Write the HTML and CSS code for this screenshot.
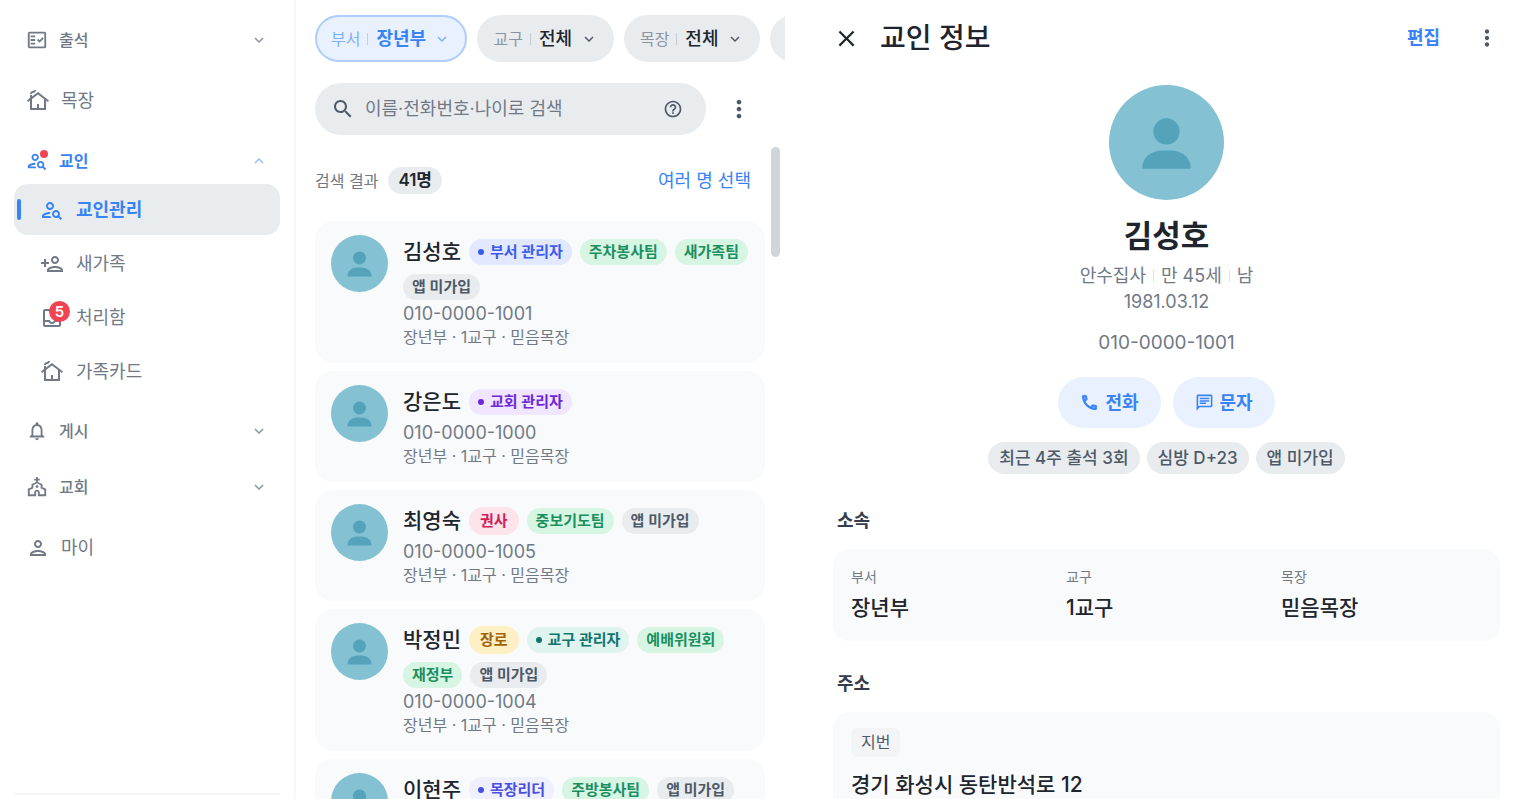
FILE: index.html
```html
<!DOCTYPE html>
<html lang="ko">

<head>
	<meta charset="UTF-8">
	<meta name="viewport" content="width=device-width, initial-scale=1.0">
	<title>교인관리</title>

	<link rel="stylesheet" href="styles.css">
</head>

<body>
	<!-- Icon sprite -->
	<svg class="sprite" aria-hidden="true">
		<symbol id="i-attend" viewBox="0 0 24 24"><path d="M20 3H4c-1.1 0-2 .9-2 2v14c0 1.1.9 2 2 2h16c1.1 0 2-.9 2-2V5c0-1.1-.9-2-2-2zm0 16H4V5h16v14z"/><path d="M19.41 10.42 17.99 9l-3.17 3.17-1.41-1.42L12 12.16 14.82 15zM5 7h5v2H5zM5 11h5v2H5zM5 15h5v2H5z"/></symbol>
		<symbol id="i-cottage" viewBox="0 0 24 24"><path d="M12 3 6 7.58V6H4v3.11L1 11.4l1.21 1.59L4 11.62V21h16v-9.38l1.79 1.36L23 11.4 12 3zm6 16h-5v-4h-2v4H6v-8.9l6-4.58 6 4.58V19zM10 1c0 1.66-1.34 3-3 3-.55 0-1 .45-1 1H4c0-1.66 1.34-3 3-3 .55 0 1-.45 1-1h2z"/></symbol>
		<symbol id="i-people" viewBox="0 0 24 24"><path d="M10 12c2.21 0 4-1.79 4-4s-1.79-4-4-4-4 1.79-4 4 1.79 4 4 4zm0-6c1.1 0 2 .9 2 2s-.9 2-2 2-2-.9-2-2 .9-2 2-2zM4 18c.22-.72 3.31-2 6-2 0-.7.13-1.37.35-1.99C7.62 13.91 2 15.27 2 18v2h9.54c-.52-.58-.93-1.25-1.19-2H4zM19.43 18.02c.36-.59.57-1.28.57-2.02 0-2.21-1.79-4-4-4s-4 1.79-4 4 1.79 4 4 4c.74 0 1.43-.22 2.02-.57L20.59 22 22 20.59l-2.57-2.57zM16 18c-1.1 0-2-.9-2-2s.9-2 2-2 2 .9 2 2-.9 2-2 2z"/></symbol>
		<symbol id="i-add" viewBox="0 0 24 24"><path d="M15 12c2.21 0 4-1.79 4-4s-1.79-4-4-4-4 1.79-4 4 1.79 4 4 4zm0-6c1.1 0 2 .9 2 2s-.9 2-2 2-2-.9-2-2 .9-2 2-2zm0 8c-2.67 0-8 1.34-8 4v2h16v-2c0-2.66-5.33-4-8-4zm-6 4c.22-.72 3.31-2 6-2 2.7 0 5.8 1.29 6 2H9zm-3-3v-3h3v-2H6V7H4v3H1v2h3v3z"/></symbol>
		<symbol id="i-inbox" viewBox="0 0 24 24"><path d="M19 3H5c-1.1 0-2 .9-2 2v14c0 1.1.9 2 2 2h14c1.1 0 2-.9 2-2V5c0-1.1-.9-2-2-2zm0 16H5v-3h3.56c.69 1.19 1.97 2 3.45 2s2.75-.81 3.45-2H19v3zm0-5h-4.99c0 1.1-.9 2-2 2s-2-.9-2-2H5V5h14v9z"/></symbol>
		<symbol id="i-bell" viewBox="0 0 24 24"><path d="M12 22c1.1 0 2-.9 2-2h-4c0 1.1.9 2 2 2zm6-6v-5c0-3.07-1.63-5.64-4.5-6.32V4c0-.83-.67-1.5-1.5-1.5s-1.5.67-1.5 1.5v.68C7.64 5.36 6 7.92 6 11v5l-2 2v1h16v-1l-2-2zm-2 1H8v-6c0-2.48 1.51-4.5 4-4.5s4 2.02 4 4.5v6z"/></symbol>
		<symbol id="i-church" viewBox="0 0 24 24"><path d="M18 12.22V9l-5-2.5V5h2V3h-2V1h-2v2H9v2h2v1.5L6 9v3.22L2 14v8h9v-4c0-.55.45-1 1-1s1 .45 1 1v4h9v-8l-4-1.78zM20 20h-5v-2.04c0-1.69-1.35-3.06-3-3.06s-3 1.37-3 3.06V20H4v-4.79l4-1.81v-3.35L12 8l4 2.04v3.35l4 1.81V20z"/><circle cx="12" cy="11.5" r="1.5"/></symbol>
		<symbol id="i-person" viewBox="0 0 24 24"><path d="M12 6c1.1 0 2 .9 2 2s-.9 2-2 2-2-.9-2-2 .9-2 2-2m0 10c2.7 0 5.8 1.29 6 2H6c.23-.72 3.31-2 6-2m0-12C9.79 4 8 5.79 8 8s1.79 4 4 4 4-1.79 4-4-1.79-4-4-4zm0 10c-2.67 0-8 1.34-8 4v2h16v-2c0-2.66-5.33-4-8-4z"/></symbol>
		<symbol id="i-down" viewBox="0 0 24 24"><path d="M7.41 8.59 12 13.17l4.59-4.58L18 10l-6 6-6-6z"/></symbol>
		<symbol id="i-up" viewBox="0 0 24 24"><path d="M7.41 15.41 12 10.83l4.59 4.58L18 14l-6-6-6 6z"/></symbol>
		<symbol id="i-search" viewBox="0 0 24 24"><path d="M15.5 14h-.79l-.28-.27C15.41 12.59 16 11.11 16 9.5 16 5.91 13.09 3 9.5 3S3 5.91 3 9.5 5.91 16 9.5 16c1.61 0 3.09-.59 4.23-1.57l.27.28v.79l5 4.99L20.49 19l-4.99-5zm-6 0C7.01 14 5 11.99 5 9.5S7.01 5 9.5 5 14 7.01 14 9.5 11.99 14 9.5 14z"/></symbol>
		<symbol id="i-help" viewBox="0 0 24 24"><path d="M11 18h2v-2h-2v2zm1-16C6.48 2 2 6.48 2 12s4.48 10 10 10 10-4.48 10-10S17.52 2 12 2zm0 18c-4.41 0-8-3.59-8-8s3.59-8 8-8 8 3.59 8 8-3.59 8-8 8zm0-14c-2.21 0-4 1.79-4 4h2c0-1.1.9-2 2-2s2 .9 2 2c0 2-3 1.75-3 5h2c0-2.25 3-2.5 3-5 0-2.21-1.79-4-4-4z"/></symbol>
		<symbol id="i-more" viewBox="0 0 24 24"><path d="M12 8c1.1 0 2-.9 2-2s-.9-2-2-2-2 .9-2 2 .9 2 2 2zm0 2c-1.1 0-2 .9-2 2s.9 2 2 2 2-.9 2-2-.9-2-2-2zm0 6c-1.1 0-2 .9-2 2s.9 2 2 2 2-.9 2-2-.9-2-2-2z"/></symbol>
		<symbol id="i-close" viewBox="0 0 24 24"><path d="M19 6.41 17.59 5 12 10.59 6.41 5 5 6.41 10.59 12 5 17.59 6.41 19 12 13.41 17.59 19 19 17.59 13.41 12z"/></symbol>
		<symbol id="i-call" viewBox="0 0 24 24"><path stroke="currentColor" d="M6.54 5c.06.89.21 1.76.45 2.59l-1.2 1.2c-.41-1.2-.67-2.47-.76-3.79h1.51m9.86 12.02c.85.24 1.72.39 2.6.45v1.49c-1.32-.09-2.59-.35-3.8-.75l1.2-1.19M7.5 3H4c-.55 0-1 .45-1 1 0 9.39 7.61 17 17 17 .55 0 1-.45 1-1v-3.49c0-.55-.45-1-1-1-1.24 0-2.45-.2-3.57-.57-.1-.04-.21-.05-.31-.05-.26 0-.51.1-.71.29l-2.2 2.2c-2.83-1.45-5.15-3.76-6.59-6.59l2.2-2.2c.28-.28.36-.67.25-1.02C8.7 6.45 8.5 5.25 8.5 4c0-.55-.45-1-1-1z"/></symbol>
		<symbol id="i-chat" viewBox="0 0 24 24"><path d="M4 4h16v12H5.17L4 17.17V4m0-2c-1.1 0-1.99.9-1.99 2L2 22l4-4h14c1.1 0 2-.9 2-2V4c0-1.1-.9-2-2-2H4zm2 10h8v2H6v-2zm0-3h12v2H6V9zm0-3h12v2H6V6z"/></symbol>
		<symbol id="i-avatar" viewBox="0 0 114 114"><circle cx="57" cy="57" r="57" fill="#83c1d3"/><circle cx="57" cy="46" r="13" fill="#55a2bb"/><path d="M33 83v-1c0-10 9-17 20-17h8c11 0 20 7 20 17v1z" fill="#55a2bb"/></symbol>
	</svg>

	<div class="app">
		<nav class="sidebar" aria-label="메뉴">
			<button class="nav-group" type="button">
				<svg class="icon"><use href="#i-attend"/></svg><span>출석</span>
				<svg class="chevron"><use href="#i-down"/></svg>
			</button>
			<a class="nav-item single" href="#"><svg class="icon"><use href="#i-cottage"/></svg>목장</a>

			<button class="nav-group open" type="button" aria-expanded="true">
				<span class="icon-wrap"><svg class="icon"><use href="#i-people"/></svg><i class="dot"></i></span><span>교인</span>
				<svg class="chevron"><use href="#i-up"/></svg>
			</button>
			<div class="sub">
				<a class="nav-item active" href="#" aria-current="page"><svg class="icon"><use href="#i-people"/></svg>교인관리</a>
				<a class="nav-item" href="#"><svg class="icon"><use href="#i-add"/></svg>새가족</a>
				<a class="nav-item" href="#"><span class="icon-wrap"><svg class="icon"><use href="#i-inbox"/></svg><span class="count">5</span></span>처리함</a>
				<a class="nav-item" href="#"><svg class="icon"><use href="#i-cottage"/></svg>가족카드</a>
			</div>

			<button class="nav-group" type="button">
				<svg class="icon"><use href="#i-bell"/></svg><span>게시</span>
				<svg class="chevron"><use href="#i-down"/></svg>
			</button>
			<button class="nav-group" type="button">
				<svg class="icon"><use href="#i-church"/></svg><span>교회</span>
				<svg class="chevron"><use href="#i-down"/></svg>
			</button>
			<a class="nav-item single" href="#"><svg class="icon"><use href="#i-person"/></svg>마이</a>
			<div class="sidebar-footer"></div>
		</nav>

		<section class="list-panel">
			<div class="filters">
				<label class="filter selected"><span class="filter-name">부서</span><select><option>장년부</option></select><svg class="chevron"><use href="#i-down"/></svg></label>
				<label class="filter"><span class="filter-name">교구</span><select><option>전체</option></select><svg class="chevron"><use href="#i-down"/></svg></label>
				<label class="filter"><span class="filter-name">목장</span><select><option>전체</option></select><svg class="chevron"><use href="#i-down"/></svg></label>
				<button class="filter" type="button" aria-label="필터 더보기"><svg class="chevron"><use href="#i-down"/></svg></button>
			</div>

			<div class="search-row">
				<div class="search">
					<svg class="icon"><use href="#i-search"/></svg>
					<input type="search" aria-label="교인 검색" placeholder="이름·전화번호·나이로 검색">
					<button class="icon-btn" type="button" aria-label="도움말"><svg class="icon small"><use href="#i-help"/></svg></button>
				</div>
				<button class="icon-btn" type="button" aria-label="더보기"><svg class="icon more"><use href="#i-more"/></svg></button>
			</div>

			<div class="results">
				<div class="result-head">
					<span>검색 결과</span><span class="total">41명</span>
					<button class="link-btn" type="button">여러 명 선택</button>
				</div>

				<article class="member">
					<svg class="avatar"><use href="#i-avatar"/></svg>
					<div class="member-body">
						<div class="tags"><h3>김성호</h3><span class="tag dept">부서 관리자</span><span class="tag team">주차봉사팀</span><span class="tag team">새가족팀</span><span class="tag">앱 미가입</span></div>
						<p class="phone">010-0000-1001</p>
						<p class="belong">장년부 · 1교구 · 믿음목장</p>
					</div>
				</article>

				<article class="member">
					<svg class="avatar"><use href="#i-avatar"/></svg>
					<div class="member-body">
						<div class="tags"><h3>강은도</h3><span class="tag admin">교회 관리자</span></div>
						<p class="phone">010-0000-1000</p>
						<p class="belong">장년부 · 1교구 · 믿음목장</p>
					</div>
				</article>

				<article class="member">
					<svg class="avatar"><use href="#i-avatar"/></svg>
					<div class="member-body">
						<div class="tags"><h3>최영숙</h3><span class="tag title rose">권사</span><span class="tag team">중보기도팀</span><span class="tag">앱 미가입</span></div>
						<p class="phone">010-0000-1005</p>
						<p class="belong">장년부 · 1교구 · 믿음목장</p>
					</div>
				</article>

				<article class="member">
					<svg class="avatar"><use href="#i-avatar"/></svg>
					<div class="member-body">
						<div class="tags"><h3>박정민</h3><span class="tag title amber">장로</span><span class="tag parish">교구 관리자</span><span class="tag team">예배위원회</span><span class="tag team">재정부</span><span class="tag">앱 미가입</span></div>
						<p class="phone">010-0000-1004</p>
						<p class="belong">장년부 · 1교구 · 믿음목장</p>
					</div>
				</article>

				<article class="member">
					<svg class="avatar"><use href="#i-avatar"/></svg>
					<div class="member-body">
						<div class="tags"><h3>이현주</h3><span class="tag leader">목장리더</span><span class="tag team">주방봉사팀</span><span class="tag">앱 미가입</span></div>
					</div>
				</article>

				<div class="scroll-thumb"></div>
			</div>
		</section>

		<main class="detail">
			<header class="detail-head">
				<button class="icon-btn" type="button" aria-label="닫기"><svg class="icon close"><use href="#i-close"/></svg></button>
				<h1>교인 정보</h1>
				<button class="link-btn edit" type="button">편집</button>
				<button class="icon-btn" type="button" aria-label="더보기"><svg class="icon more"><use href="#i-more"/></svg></button>
			</header>

			<section class="profile">
				<svg class="avatar large"><use href="#i-avatar"/></svg>
				<h2>김성호</h2>
				<p class="facts"><span>안수집사</span><span>만 45세</span><span>남</span></p>
				<p class="birth">1981.03.12</p>
				<p class="profile-phone">010-0000-1001</p>
				<div class="actions">
					<button type="button"><svg><use href="#i-call"/></svg>전화</button>
					<button type="button"><svg><use href="#i-chat"/></svg>문자</button>
				</div>
				<div class="chips"><span>최근 4주 출석 3회</span><span>심방 D+23</span><span>앱 미가입</span></div>
			</section>

			<section class="info">
				<h4>소속</h4>
				<dl class="info-card columns">
					<div><dt>부서</dt><dd>장년부</dd></div>
					<div><dt>교구</dt><dd>1교구</dd></div>
					<div><dt>목장</dt><dd>믿음목장</dd></div>
				</dl>
			</section>

			<section class="info">
				<h4>주소</h4>
				<div class="info-card address">
					<span class="addr-type">지번</span>
					<p>경기 화성시 동탄반석로 12</p>
				</div>
			</section>
		</main>
	</div>
</body>

</html>
```
FILE: styles.css
```css
:root {
	--blue: #3883f6;
	--blue-soft: #e9f1fe;
	--ink: #20252d;
	--gray-dark: #4e5968;
	--gray: #707985;
	--gray-light: #8b95a1;
	--fill: #e9ecef;
	--card: #f9fafb;
}

* {
	box-sizing: border-box;
}

body {
	margin: 0;
	font-family: Inter, "Noto Sans CJK KR", sans-serif;
	font-size: 16px;
	line-height: 24px;
	color: var(--ink);
	background: #fff;
}

h1, h2, h3, h4, p, dl, dd {
	margin: 0;
}

button, input, select {
	font: inherit;
	color: inherit;
	border: 0;
	padding: 0;
	background: none;
}

button {
	cursor: pointer;
}

a {
	color: inherit;
	text-decoration: none;
}

svg {
	display: block;
	flex: none;
	fill: currentColor;
}

.sprite {
	display: none;
}

.app {
	display: flex;
	height: 100vh;
	overflow: hidden;
}

.icon {
	width: 24px;
	height: 24px;
}

.icon.small {
	width: 20px;
	height: 20px;
}

.icon.more {
	width: 28px;
	height: 28px;
}

.chevron {
	width: 18px;
	height: 18px;
}

/* Sidebar */
.sidebar {
	display: flex;
	flex-direction: column;
	gap: 10px;
	flex: none;
	width: 296px;
	padding: 17px 14px 0;
	border-right: 2px solid #f7f8f9;
	color: var(--gray);
}

.nav-group {
	display: flex;
	align-items: center;
	gap: 11px;
	height: 46px;
	flex: none;
	padding: 0 12px;
	font-weight: 500;
}

.nav-group .icon {
	width: 22px;
	height: 22px;
}

.nav-group .chevron {
	margin-left: auto;
	color: var(--gray-light);
}

.nav-group.open {
	color: var(--blue);
	font-weight: 700;
}

.nav-group.open .chevron {
	color: #90bcfa;
}

.nav-item {
	position: relative;
	display: flex;
	align-items: center;
	gap: 12px;
	height: 51px;
	flex: none;
	padding: 0 26px;
	border-radius: 14px;
	font-size: 18px;
}

.nav-item.single {
	margin: 2px 0;
	padding: 0 12px;
	gap: 11px;
}

.nav-item.active {
	background: var(--fill);
	color: var(--blue);
	font-weight: 700;
}

.nav-item.active::before {
	content: "";
	position: absolute;
	left: 3px;
	top: 15px;
	bottom: 15px;
	width: 4px;
	border-radius: 2px;
	background: var(--blue);
}

.sub {
	display: flex;
	flex-direction: column;
	gap: 3px;
	margin-top: -10px;
	padding-bottom: 1px;
}

.icon-wrap {
	position: relative;
}

.dot {
	position: absolute;
	top: 0;
	right: 0;
	width: 8px;
	height: 8px;
	border-radius: 50%;
	background: #f04452;
}

.count {
	position: absolute;
	top: -5px;
	right: -6px;
	width: 21px;
	height: 21px;
	border-radius: 50%;
	background: #f04452;
	color: #fff;
	font-size: 15px;
	font-weight: 600;
	line-height: 21px;
	text-align: center;
}

.sidebar-footer {
	margin-top: auto;
	height: 6px;
	border-top: 2px solid #f5f6f7;
}

/* Member list */
.list-panel {
	display: flex;
	flex-direction: column;
	flex: none;
	width: 489px;
	padding: 15px 0 0 19px;
	overflow: hidden;
}

.filters {
	display: flex;
	gap: 10px;
	flex: none;
}

.filter {
	display: flex;
	align-items: center;
	flex: none;
	height: 47px;
	padding: 0 16px;
	border-radius: 24px;
	background: var(--fill);
	font-size: 18px;
}

.filter-name {
	display: flex;
	align-items: center;
	color: var(--gray-light);
	font-size: 16px;
}

.filter-name::after {
	content: "";
	width: 1px;
	height: 12px;
	margin: 0 8px 0 7px;
	background: #c5cbd2;
}

.filter select {
	appearance: none;
	font-weight: 500;
	cursor: pointer;
}

.filter .chevron {
	margin-left: 7px;
	color: var(--gray-dark);
}

.filter.selected {
	background: var(--blue-soft);
	color: var(--blue);
	box-shadow: inset 0 0 0 2px #b0cefb;
}

.filter.selected select {
	font-weight: 700;
}

.filter.selected .filter-name,
.filter.selected .chevron {
	color: #7fb0f8;
}

.filter.selected .filter-name::after {
	background: #b5d2fb;
}

.search-row {
	display: flex;
	align-items: center;
	gap: 19px;
	flex: none;
	margin: 21px 34px 0 0;
	color: var(--gray-dark);
}

.search {
	display: flex;
	align-items: center;
	gap: 10px;
	flex: 1;
	height: 52px;
	padding: 0 23px 0 16px;
	border-radius: 26px;
	background: var(--fill);
}

.search input {
	flex: 1;
	min-width: 0;
	font-size: 18px;
	outline: none;
}

.search input::placeholder {
	color: var(--gray);
	opacity: 1;
}

.search + .icon-btn {
	margin-right: 2px;
}

.results {
	position: relative;
	display: flex;
	flex-direction: column;
	gap: 8px;
	flex: 1;
	min-height: 0;
	margin-top: 12px;
	padding: 20px 20px 0 0;
	overflow: hidden;
}

.result-head {
	display: flex;
	align-items: center;
	gap: 10px;
	flex: none;
	height: 27px;
	margin: 0 14px 19px 0;
	color: var(--gray);
}

.total {
	padding: 0 10px;
	border-radius: 14px;
	background: var(--fill);
	color: var(--ink);
	font-size: 17px;
	font-weight: 600;
	line-height: 27px;
}

.link-btn {
	margin-left: auto;
	color: var(--blue);
	font-size: 18px;
}

.member {
	display: flex;
	gap: 15px;
	flex: none;
	padding: 14px 16px;
	border-radius: 18px;
	background: var(--card);
}

.avatar {
	width: 57px;
	height: 57px;
}

.member-body {
	flex: 1;
	min-width: 0;
}

.tags {
	display: flex;
	flex-wrap: wrap;
	align-items: center;
	gap: 5px 8px;
	margin-right: -8px;
}

.tags h3 {
	font-size: 21px;
	font-weight: 500;
	line-height: 34px;
}

.tag {
	display: flex;
	align-items: center;
	padding: 0 9px;
	border-radius: 13px;
	background: var(--fill);
	color: var(--gray-dark);
	font-size: 15px;
	font-weight: 600;
	line-height: 26px;
}

.tag.title {
	padding: 0 11px;
	border-radius: 14px;
	line-height: 28px;
}

.tag.team {
	background: #d7f5e3;
	color: #1a8f5f;
}

.tag.rose {
	background: #fde3ea;
	color: #cf1f5c;
}

.tag.amber {
	background: #ffefc4;
	color: #a16207;
}

.tag.dept {
	background: #e2e8ff;
	color: #3b5bea;
}

.tag.admin {
	background: #f0e6ff;
	color: #6d28d9;
}

.tag.parish {
	background: #dff3ef;
	color: #0f766e;
}

.tag.leader {
	background: #eef0ff;
	color: #4a4fe0;
}

.tag.dept::before,
.tag.admin::before,
.tag.parish::before,
.tag.leader::before {
	content: "";
	width: 6px;
	height: 6px;
	margin-right: 6px;
	border-radius: 50%;
	background: currentColor;
}

.phone {
	margin-top: 2px;
	color: var(--gray);
	font-size: 18px;
}

.belong {
	color: var(--gray);
	line-height: 23px;
}

.scroll-thumb {
	position: absolute;
	top: 0;
	right: 5px;
	width: 9px;
	height: 110px;
	border-radius: 5px;
	background: #cfd6d9;
}

/* Member detail */
.detail {
	flex: 1;
	min-width: 0;
	padding: 16px 20px 0 48px;
	overflow: hidden;
}

.detail-head {
	display: flex;
	align-items: center;
	height: 44px;
}

.detail-head .more {
	width: 26px;
	height: 26px;
	color: var(--gray-dark);
}

.icon.close {
	width: 27px;
	height: 27px;
}

h1 {
	margin-left: 20px;
	font-size: 28px;
	font-weight: 500;
	line-height: 40px;
}

.edit {
	margin-right: 34px;
	font-weight: 600;
}

.profile {
	display: flex;
	flex-direction: column;
	align-items: center;
	padding: 25px 0 4px;
	color: var(--gray);
}

.avatar.large {
	width: 115px;
	height: 115px;
}

h2 {
	margin-top: 14px;
	color: var(--ink);
	font-size: 31px;
	font-weight: 700;
	line-height: 44px;
}

.facts {
	display: flex;
	align-items: center;
	margin-top: 4px;
	font-size: 18px;
	line-height: 28px;
}

.facts span + span::before {
	content: "";
	display: inline-block;
	width: 1px;
	height: 12px;
	margin: 0 7px;
	background: #e0e3e7;
}

.birth {
	font-size: 18px;
}

.profile-phone {
	margin-top: 15px;
	font-size: 19px;
	line-height: 28px;
}

.actions {
	display: flex;
	gap: 12px;
	margin-top: 20px;
}

.actions button {
	display: flex;
	align-items: center;
	gap: 6px;
	height: 51px;
	padding: 0 22px;
	border-radius: 26px;
	background: var(--blue-soft);
	color: var(--blue);
	font-size: 18px;
	font-weight: 700;
}

.actions svg {
	width: 19px;
	height: 19px;
}

.chips {
	display: flex;
	gap: 7px;
	margin-top: 14px;
}

.chips span {
	padding: 0 11px;
	border-radius: 16px;
	background: var(--fill);
	color: var(--gray-dark);
	font-size: 17px;
	font-weight: 500;
	line-height: 32px;
}

.info {
	margin-top: 29px;
}

h4 {
	padding-left: 4px;
	color: #333d4b;
	font-size: 18px;
	font-weight: 600;
	line-height: 28px;
}

.info-card {
	margin-top: 14px;
	padding: 16px 18px;
	border-radius: 16px;
	background: var(--card);
}

.columns {
	display: grid;
	grid-template-columns: repeat(3, 1fr);
	gap: 14px;
	padding-bottom: 14px;
}

dt {
	color: var(--gray);
	font-size: 14px;
	line-height: 24px;
}

dd {
	font-size: 21px;
	font-weight: 500;
	line-height: 38px;
}

.addr-type {
	display: inline-block;
	padding: 0 10px;
	border-radius: 6px;
	background: #f2f4f6;
	color: var(--gray-dark);
	line-height: 29px;
}

.address p {
	margin-top: 10px;
	font-size: 21px;
	font-weight: 500;
	line-height: 36px;
}
```
